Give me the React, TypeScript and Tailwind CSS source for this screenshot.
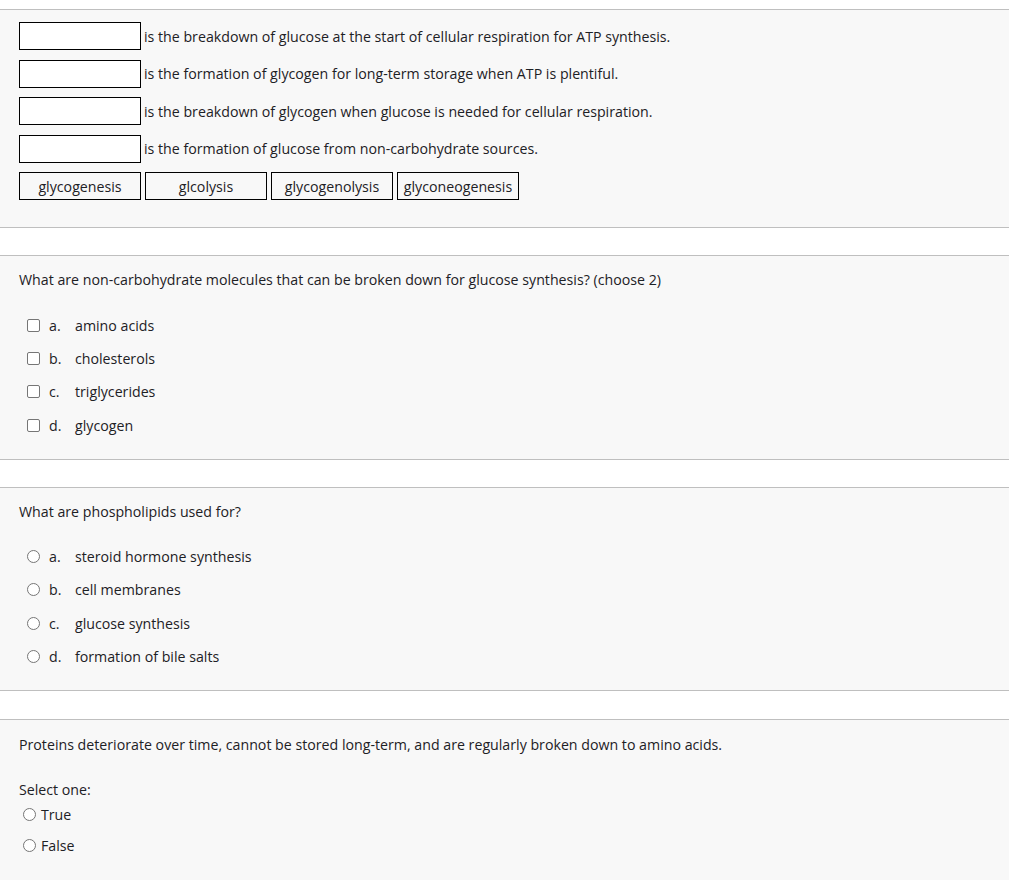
import React from "react";

const font = { fontFamily: '"Open Sans", "Noto Sans", sans-serif' };

function Checkbox() {
  return <span className="inline-block w-[13px] h-[13px] border border-[#767676] rounded-[2px] bg-white shrink-0" />;
}
function Radio() {
  return <span className="inline-block w-[13px] h-[13px] border border-[#767676] rounded-full bg-white shrink-0" />;
}

function Option({ letter, text, kind }: { letter: string; text: string; kind: "c" | "r" }) {
  return (
    <div className="flex items-center h-[33.3px] pl-[8px]">
      {kind === "c" ? <Checkbox /> : <Radio />}
      <span className="ml-[9px] w-[26px] pt-[1px]">{letter}</span>
      <span className="pt-[1px]">{text}</span>
    </div>
  );
}

export default function App() {
  const rows = [
    "is the breakdown of glucose at the start of cellular respiration for ATP synthesis.",
    "is the formation of glycogen for long-term storage when ATP is plentiful.",
    "is the breakdown of glycogen when glucose is needed for cellular respiration.",
    "is the formation of glucose from non-carbohydrate sources.",
  ];
  const drags = ["glycogenesis", "glcolysis", "glycogenolysis", "glyconeogenesis"];
  return (
    <div className="bg-white min-h-[880px] pt-[9px] text-[14.2px] leading-[20px] text-[#1d2125]" style={font}>
      {/* Panel 1 */}
      <div className="bg-[#f8f8f8] border-y border-[#bfbfbf] h-[219px] pt-[12px] pl-[19px]">
        <div className="flex flex-col gap-[9.5px]">
          {rows.map((r) => (
            <div key={r} className="flex items-center">
              <span className="w-[122px] h-[28px] border border-black bg-white shrink-0" />
              <span className="ml-[3px] pt-[1px]">{r}</span>
            </div>
          ))}
          <div className="flex gap-[4px]">
            {drags.map((d) => (
              <span key={d} className="w-[122px] h-[28px] pt-[1px] border border-black flex items-center justify-center">
                {d}
              </span>
            ))}
          </div>
        </div>
      </div>

      {/* Panel 2 */}
      <div className="mt-[27px] bg-[#f8f8f8] border-y border-[#bfbfbf] h-[205px] pt-[14px] pl-[19px]">
        <div>What are non-carbohydrate molecules that can be broken down for glucose synthesis? (choose 2)</div>
        <div className="mt-[18.5px]">
          <Option kind="c" letter="a." text="amino acids" />
          <Option kind="c" letter="b." text="cholesterols" />
          <Option kind="c" letter="c." text="triglycerides" />
          <Option kind="c" letter="d." text="glycogen" />
        </div>
      </div>

      {/* Panel 3 */}
      <div className="mt-[27px] bg-[#f8f8f8] border-y border-[#bfbfbf] h-[204px] pt-[14px] pl-[19px]">
        <div>What are phospholipids used for?</div>
        <div className="mt-[18px]">
          <Option kind="r" letter="a." text="steroid hormone synthesis" />
          <Option kind="r" letter="b." text="cell membranes" />
          <Option kind="r" letter="c." text="glucose synthesis" />
          <Option kind="r" letter="d." text="formation of bile salts" />
        </div>
      </div>

      {/* Panel 4 */}
      <div className="mt-[28px] bg-[#f8f8f8] border-t border-[#bfbfbf] h-[200px] pt-[15px] pl-[19px]">
        <div>Proteins deteriorate over time, cannot be stored long-term, and are regularly broken down to amino acids.</div>
        <div className="mt-[25px]">Select one:</div>
        <div className="flex items-center h-[25px] mt-[2px] pl-[4px]">
          <Radio />
          <span className="ml-[5px]">True</span>
        </div>
        <div className="flex items-center h-[25px] mt-[6px] pl-[4px]">
          <Radio />
          <span className="ml-[5px]">False</span>
        </div>
      </div>
    </div>
  );
}
